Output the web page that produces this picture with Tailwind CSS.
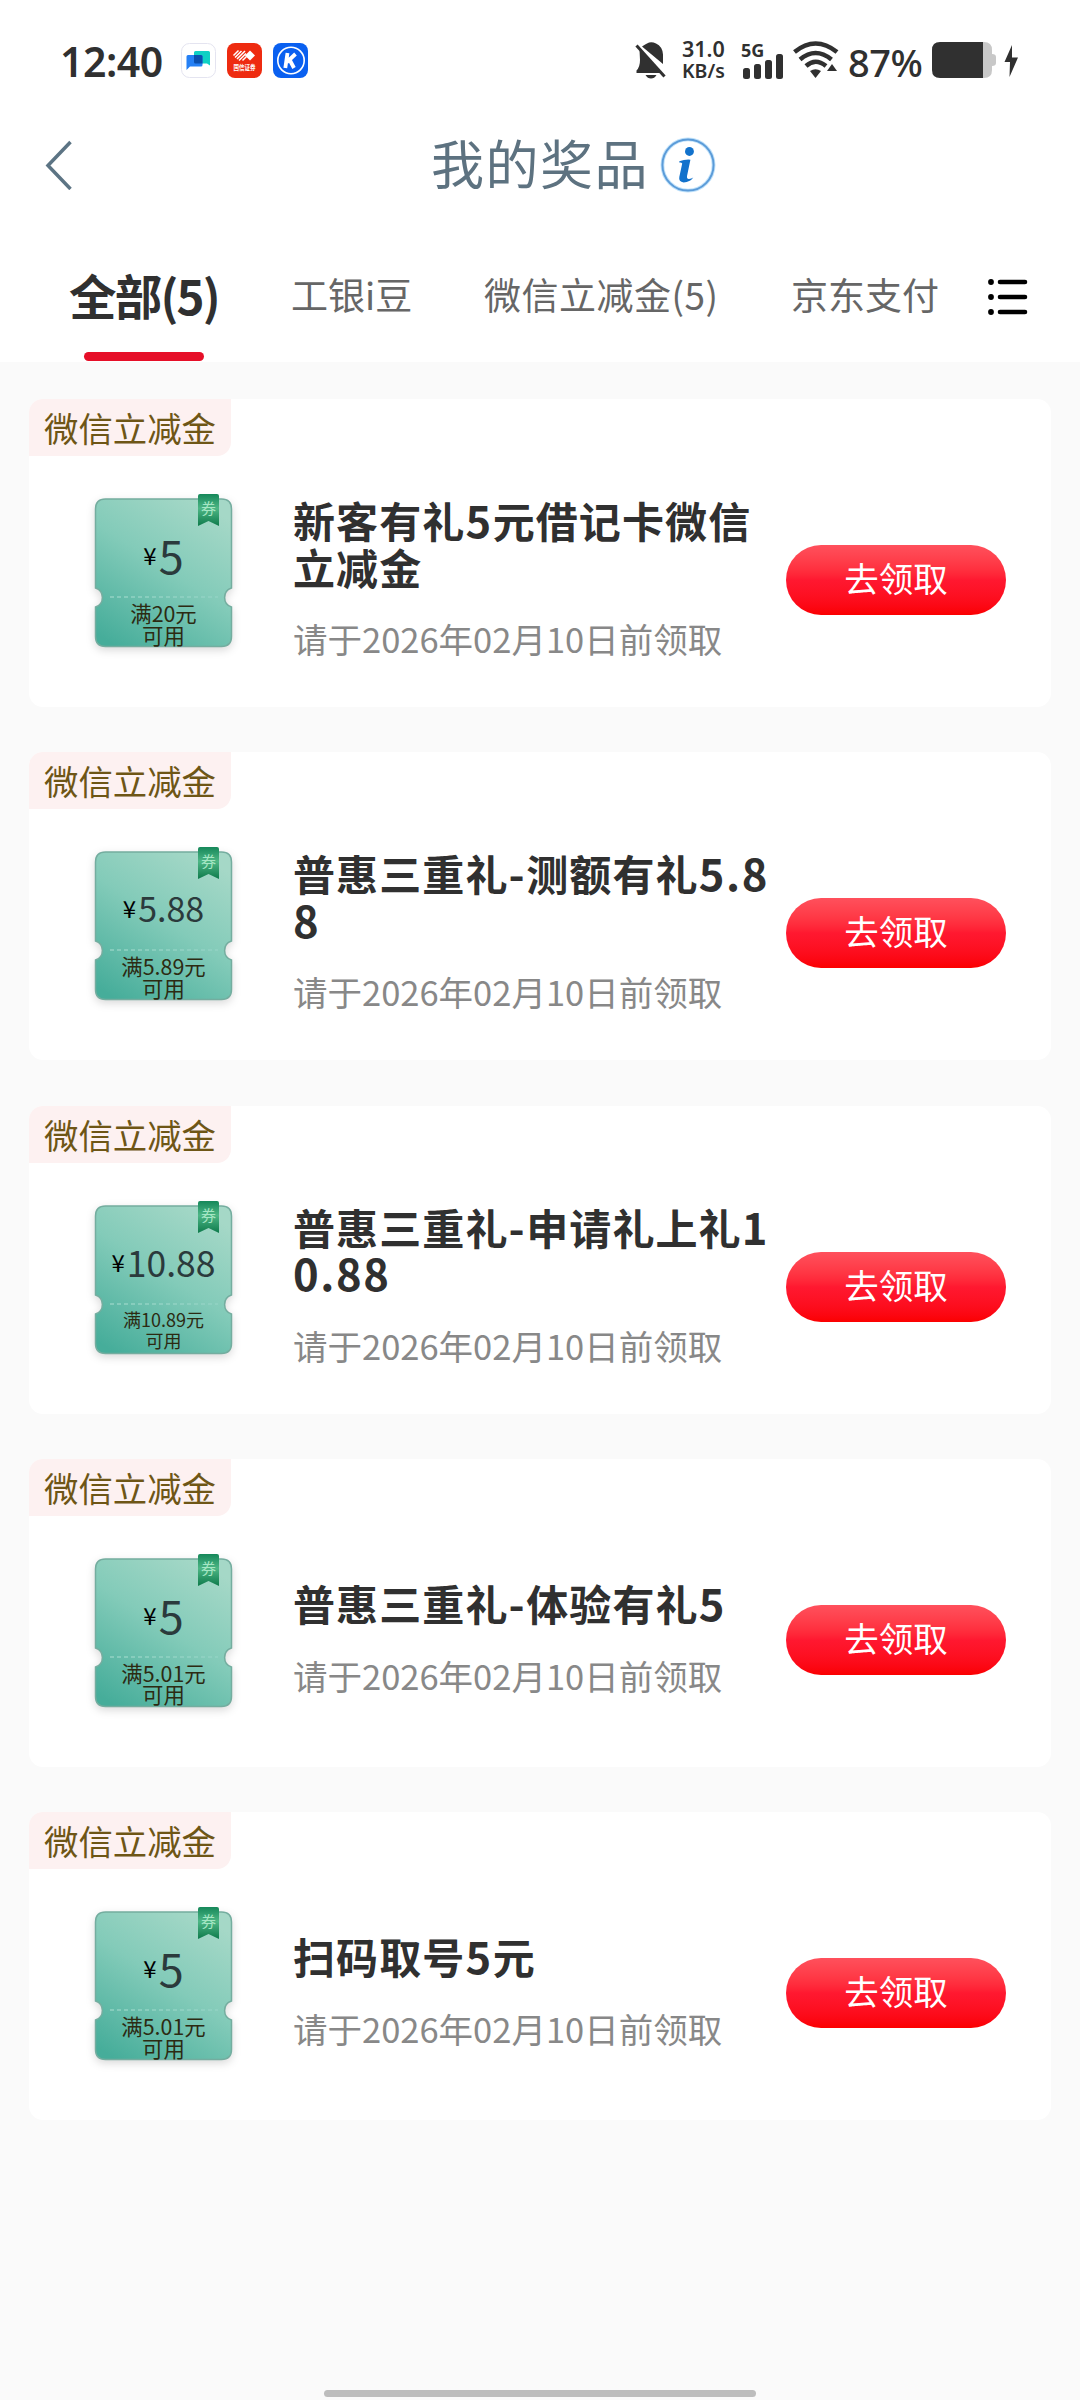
<!DOCTYPE html>
<html lang="zh-CN">
<head>
<meta charset="utf-8">
<title>我的奖品</title>
<script src="https://cdn.jsdelivr.net/npm/@tailwindcss/browser@4"></script>
</head>
<body class="bg-[#fafafa]">
<div class="relative flex h-[2400px] w-[1080px] flex-col overflow-hidden bg-[#fafafa] font-['Noto_Sans_CJK_SC',sans-serif]">

  <!-- status bar -->
  <header class="flex h-[362px] shrink-0 flex-col bg-white">
    <div class="flex h-[120px] items-center pl-[60px] text-[#303030]">
      <div class="mt-[2px] flex w-[121px] items-center font-['Noto_Sans',sans-serif] text-[41px] leading-none font-semibold tracking-[-0.5px]">12:40</div>
      <div class="flex gap-[11px]">
        <svg class="h-[35px] w-[35px]" viewBox="0 0 35 35"><rect x=".5" y=".5" width="34" height="34" rx="8" fill="#fff" stroke="#e4e4f0"/><path d="M13 9.500q0-1.500 1.500-1.500h13q1.500 0 1.500 1.500V22.500L26 20.500H14.500q-1.500 0-1.500-1.500z" fill="#0fd0c4"/><path d="M5.500 13.500q0-1.500 1.500-1.500h13q1.500 0 1.500 1.500v8.500q0 1.500-1.500 1.500H9L5.500 27z" fill="#2580f5"/><path d="M13 12h7q1.500 0 1.500 1.500v7h-7q-1.500 0-1.500-1.500z" fill="#0a4fae"/></svg>
        <svg class="h-[35px] w-[35px]" viewBox="0 0 35 35"><rect width="35" height="35" rx="8" fill="#ee2b10"/><path d="M23 7.500l5 5-5 5-5-5z" fill="#fff"/><path d="M6.500 12.500l5-5M8 14.500l6.500-6.500M10 16l8-8M12 17.500l7-7M15.500 17.500l4-4" stroke="#fff" stroke-width="1.500"/><text x="17.500" y="26.500" text-anchor="middle" font-size="6.500" font-weight="700" textLength="22" lengthAdjust="spacingAndGlyphs" fill="#fff">国信证券</text></svg>
        <svg class="h-[35px] w-[35px]" viewBox="0 0 35 35"><rect width="35" height="35" rx="8" fill="#0a60f0"/><circle cx="18" cy="17.500" r="13.200" fill="none" stroke="#fff" stroke-width="1.600"/><path d="M14.500 10l-2.200 15M22.500 11l-8.500 8M17 17.500l4 7.500" fill="none" stroke="#fff" stroke-width="3.800"/></svg>
      </div>
      <svg class="ml-[327px] h-[38px] w-[32px]" viewBox="0 0 32 38"><path d="M7 5.500Q10 3.500 12 2.500q4-2.500 9 0 6.500 3 7 11v9.500z" fill="#303030"/><path d="M4.500 9L27 32H1.500v-2.500Q5 26 5 19z" fill="#303030"/><path d="M10.500 34h11q-2 3.500-5.500 3.500T10.500 34z" fill="#303030"/><path d="M1.500 4.500l28 31" stroke="#303030" stroke-width="3"/></svg>
      <div class="ml-[15px] w-[45px] font-['Noto_Sans',sans-serif] text-[21.500px] leading-[22px] font-semibold whitespace-nowrap"><div>31.0</div><div class="text-[19.500px]">KB/s</div></div>
      <div class="relative ml-[14px] h-[40px] w-[44px]">
        <div class="absolute top-[1px] left-0 font-['Noto_Sans',sans-serif] text-[18px] leading-[18px] font-bold">5G</div>
        <svg class="h-[40px] w-[44px]" viewBox="0 0 44 40"><g fill="#303030"><rect x="2" y="28" width="7" height="11" rx="2.500"/><rect x="13" y="24" width="7" height="15" rx="2.500"/><rect x="24" y="20" width="7" height="19" rx="2.500"/><rect x="35" y="14" width="7" height="25" rx="2.500"/></g></svg>
      </div>
      <svg class="ml-[8px] h-[38px] w-[46px]" viewBox="0 0 46 38"><g fill="none" stroke="#303030" stroke-width="4.500"><path d="M1.500 11Q22.500-6 44 11"/><path d="M7 18.500q15.500-13 31.500 0"/><path d="M13 25q9.500-8.500 20 0"/></g><path d="M17 30q5.500-3.500 11 0l-5.500 7z" fill="#303030"/><path d="M39 23l5 7H34z" fill="#303030"/></svg>
      <div class="mt-[3px] ml-[9px] w-[80px] font-['Noto_Sans',sans-serif] text-[38px] leading-none font-medium tracking-[-0.5px]">87%</div>
      <svg class="ml-[4px] h-[36px] w-[88px]" viewBox="0 0 88 36"><path d="M50 0h2q8 0 8 8v4q4 0 4 3v6q0 3-4 3v4q0 8-8 8h-2z" fill="#c8c8c8"/><path d="M8 0h43v36H8q-8 0-8-8V8q0-8 8-8z" fill="#303030"/><path d="M80 3L72.500 20h5.500L77.500 35 86 15.500h-6z" fill="#303030"/></svg>
    </div>

    <!-- title bar -->
    <div class="flex h-[90px] items-center pl-[44px]">
      <svg class="h-[50px] w-[30px]" viewBox="0 0 30 50"><path d="M26.500 2L4 25.500 26.500 49" fill="none" stroke="#5c7484" stroke-width="3.500"/></svg>
      <h1 class="mb-[6px] ml-[357px] w-[220px] text-[53px] leading-[90px] tracking-[1.500px] whitespace-nowrap text-[#5d7280]">我的奖品</h1>
      <svg class="ml-[9px] h-[56px] w-[56px]" viewBox="0 0 58 58"><circle cx="29" cy="29" r="26.500" fill="none" stroke="#bfe1fa" stroke-width="4"/><circle cx="29" cy="29" r="26.500" fill="none" stroke="#5b9bd8" stroke-width="2"/><circle cx="30.500" cy="15" r="4.600" fill="#1272cc"/><path d="M20 25q6-2 11.500-1.500l-3.500 17q-.500 3 2 3 2.500-.200 4.500-1.500-3.500 5-10 5-5.500-.500-4.500-5.500l3-14q-1-1.500-3-1z" fill="#1272cc"/></svg>
    </div>

    <!-- category tabs -->
    <nav class="flex h-[152px] text-[37px] leading-[54px] text-[#666]">
      <div class="ml-[69px] flex w-[150px] flex-col items-center justify-end whitespace-nowrap">
        <div class="mb-[27px] text-[47.500px] leading-[60px] font-bold tracking-[-1.800px] text-[#303030]">全部(5)</div>
        <div class="mb-[1px] h-[9px] w-[120px] rounded-full bg-[#e60f28]"></div>
      </div>
      <div class="ml-[72px] flex w-[193px] pt-[57px] whitespace-nowrap">工银i豆</div>
      <div class="flex w-[307px] pt-[57px] tracking-[0.500px] whitespace-nowrap">微信立减金(5)</div>
      <div class="flex w-[197px] pt-[57px] whitespace-nowrap">京东支付</div>
      <svg class="mt-[68px] h-[38px] w-[40px]" viewBox="0 0 40 38"><g stroke="#000" stroke-width="4.600" stroke-linecap="round"><path d="M12 4h25M12 19h25M12 34h25"/></g><circle cx="3" cy="4" r="2.900"/><circle cx="3" cy="19" r="2.900"/><circle cx="3" cy="34" r="2.900"/></svg>
    </nav>
  </header>

  <main id="list" class="flex flex-col gap-[45.3px] pt-[37px] pl-[29px]"></main>

  <div class="absolute top-[2390px] left-[324px] h-[7px] w-[432px] rounded-full bg-[#bdbdbd]"></div>
</div>

<svg class="absolute h-0 w-0" aria-hidden="true">
  <defs>
    <linearGradient id="tk" x1="0.15" y1="1" x2="0.75" y2="0"><stop offset="0" stop-color="#46ad9a"/><stop offset=".55" stop-color="#83cbb9"/><stop offset="1" stop-color="#a5d8c7"/></linearGradient>
    <linearGradient id="rb" x1="0" y1="0" x2="0" y2="1"><stop offset="0" stop-color="#16885a"/><stop offset=".45" stop-color="#4db685"/><stop offset="1" stop-color="#0e7a4b"/></linearGradient>
  </defs>
</svg>

<script>
const prizes = [
  { price: '5', size: 45, cond: '满20元', cs: 21.4, title: ['新客有礼5元借记卡微信', '立减金'] },
  { price: '5.88', size: 34, cond: '满5.89元', cs: 21.4, title: ['普惠三重礼-测额有礼5.8', '8'] },
  { price: '10.88', size: 35.5, cond: '满10.89元', cs: 18, title: ['普惠三重礼-申请礼上礼1', '0.88'] },
  { price: '5', size: 45, cond: '满5.01元', cs: 21.4, title: ['普惠三重礼-体验有礼5'] },
  { price: '5', size: 45, cond: '满5.01元', cs: 21.4, title: ['扫码取号5元'] },
];
// Digits and hyphens in titles are set slightly larger than the Chinese characters.
const digits = s => s.replace(/[\d.-]+/g, m => `<span class="text-[43.500px] tracking-[1.600px]">${m}</span>`);
document.getElementById('list').innerHTML = prizes.map(p => `
  <section class="relative flex h-[308px] w-[1022px] items-start rounded-[14px] bg-white">
    <div class="absolute top-0 left-0 h-[57px] w-[202px] rounded-tl-[14px] rounded-br-[14px] bg-[#fdf1f1] pl-[15px] text-[34.400px] leading-[57px] whitespace-nowrap text-[#6e5616]">微信立减金</div>
    <div class="relative mt-[91px] ml-[58px] h-[170px] w-[153px] shrink-0">
      <svg class="absolute inset-0 h-[170px] w-[153px] overflow-visible drop-shadow-[0_3px_4px_rgba(0,0,0,0.15)]" viewBox="0 0 153 170">
        <path d="M18.500 9h116q10 0 10 10v79a10 10 0 0 0 0 19v29.500q0 10-10 10h-116q-10 0-10-10V117a10 10 0 0 0 0-19V19q0-10 10-10z" fill="url(#tk)" stroke="#74ad9f" stroke-width="1.500"/>
        <path d="M23 107h108" stroke="#93d2c3" stroke-width="1.500" stroke-dasharray="4 3"/>
      </svg>
      <svg class="absolute top-[4px] left-[110px] h-[32px] w-[23px]" viewBox="0 0 23 32"><path d="M1 2q0-2 2-2h17q2 0 2 2v30l-10.500-5L1 32z" fill="url(#rb)"/><text x="11.500" y="20" text-anchor="middle" font-size="15" fill="#a5e6c4">券</text></svg>
      <div class="absolute top-[33px] left-0 flex h-[64px] w-[153px] items-center justify-center text-[#2b3a3c]">
        <span class="mr-[2px] text-[24px] leading-none text-black">¥</span><span class="leading-[64px]" style="font-size:${p.size}px">${p.price}</span>
      </div>
      <div class="absolute top-[112px] left-0 flex w-[153px] flex-col items-center leading-[21.500px] text-[#2c2a12]" style="font-size:${p.cs}px"><span>${p.cond}</span><span>可用</span></div>
    </div>
    <div class="mt-[79px] ml-[53px] flex h-[200px] w-[493px] flex-col justify-center">
      <h2 class="flex flex-col text-[42px] leading-[46.600px] font-bold tracking-[1.100px] whitespace-nowrap text-[#303030]">${p.title.map(t => `<span class="block h-[46.600px]">${digits(t)}</span>`).join('')}</h2>
      <p class="mt-[27px] text-[34.500px] leading-[42px] whitespace-nowrap text-[#888]">请于2026年02月10日前领取</p>
    </div>
    <button class="mt-[146px] flex h-[70px] w-[220px] justify-center rounded-full bg-linear-to-b from-[#ff505c] via-[#ff1830] to-[#fb0000] text-[34.500px] leading-[65px] text-white">去领取</button>
  </section>`).join('');
</script>
</body>
</html>
